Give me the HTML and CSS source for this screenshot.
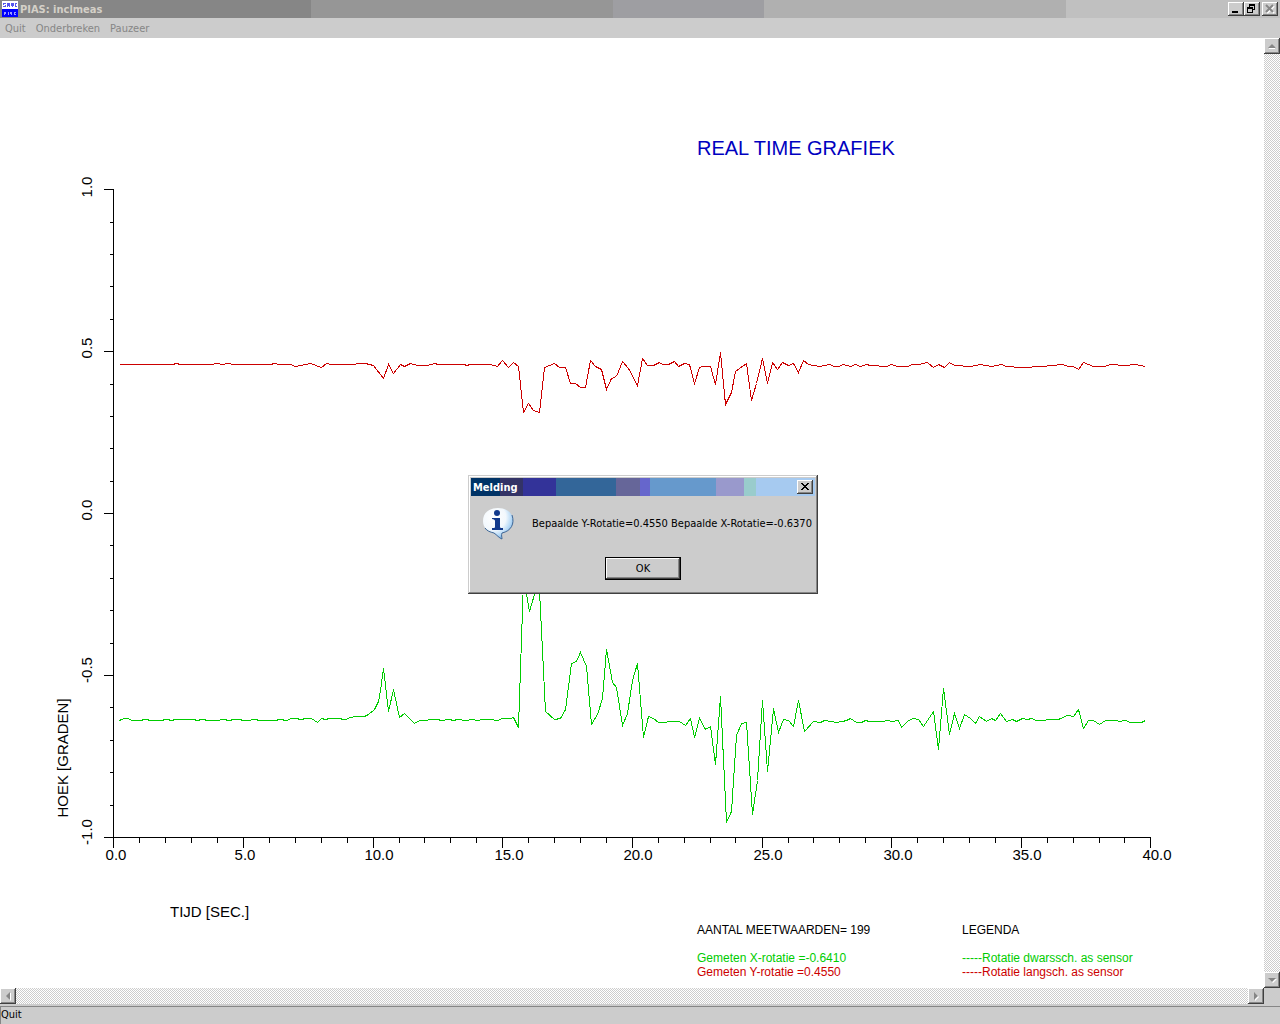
FILE: index.html
```html
<!DOCTYPE html>
<html lang="nl">
<head>
<meta charset="utf-8">
<title>PIAS: inclmeas</title>
<link rel="stylesheet" href="styles.css">
</head>
<body>
<div class="window">
  <header class="titlebar">
    <svg class="app-icon" width="16" height="16" viewBox="0 0 16 16" shape-rendering="crispEdges" aria-hidden="true">
      <rect width="16" height="8" fill="#fff"/>
      <rect y="8" width="16" height="8" fill="#00f"/>
      <path d="M1 2h3v1h-2v1h2v2h-3v-1h2v-1h-2zM5 2h3v4h-1v-1h-1v1h-1zM9 2h3v3h-1v1h-1v-1h-1zM13 2h2v1h-1v2h1v1h-2z" fill="#5555ee"/>
      <path d="M2 11h2v2h-1v1h-1zM6 11h1v3h-1zM8 11h2v3h-1v-1h-1zM12 11h2v1h-1v1h1v1h-2z" fill="#9c9cff"/>
    </svg>
    <h1 class="titlebar-text">PIAS: inclmeas</h1>
    <div class="window-buttons">
      <button class="bevel caption-button" type="button" aria-label="Minimize">
        <svg width="12" height="10" viewBox="0 0 12 10" shape-rendering="crispEdges"><path d="M2 7h6v2h-6z"/></svg>
      </button>
      <button class="bevel caption-button" type="button" aria-label="Restore">
        <svg width="12" height="10" viewBox="0 0 12 10" shape-rendering="crispEdges"><path fill-rule="evenodd" d="M3 0h6v6h-2v3h-6v-6h2zM4 2v1h3v2h1v-3zM2 5v3h4v-3z"/></svg>
      </button>
      <button class="bevel caption-button caption-close" type="button" aria-label="Close" disabled>
        <svg width="12" height="10" viewBox="0 0 12 10"><path d="M3 2l7 7M10 2l-7 7" stroke="#fff" stroke-width="2"/><path d="M2 1l7 7M9 1l-7 7" stroke="#868686" stroke-width="2"/></svg>
      </button>
    </div>
  </header>

  <nav class="menubar">
    <button type="button" disabled>Quit</button>
    <button type="button" disabled>Onderbreken</button>
    <button type="button" disabled>Pauzeer</button>
  </nav>

  <main class="workspace">
    <section class="canvas">
      <div class="columns chart-head">
        <h2 class="chart-title">REAL TIME GRAFIEK</h2>
      </div>
      <svg class="chart" viewBox="0 178 1264 690" role="img" aria-label="Hoek in graden tegen tijd in seconden">
        <g class="lines" transform="translate(.5 .5)">
          <path class="axis" d="M103 189H113V837M103 837H1150
            M109 222h4M109 254h4M109 286h4M109 319h4M103 351h10M109 384h4M109 416h4M109 448h4M109 481h4M103 513h10
            M109 545h4M109 578h4M109 610h4M109 643h4M103 675h10M109 707h4M109 740h4M109 772h4M109 805h4
            M113 837v10M139 837v5M165 837v5M191 837v5M217 837v5M243 837v10M269 837v5M295 837v5M321 837v5M347 837v5
            M373 837v10M399 837v5M424 837v5M450 837v5M476 837v5M502 837v10M528 837v5M554 837v5M580 837v5M606 837v5
            M632 837v10M658 837v5M684 837v5M710 837v5M735 837v5M762 837v10M788 837v5M813 837v5M839 837v5M865 837v5
            M891 837v10M917 837v5M943 837v5M969 837v5M995 837v5M1021 837v10M1047 837v5M1073 837v5M1099 837v5M1124 837v5M1150 837v10"/>
          <polyline class="series-y" points="119,364 172,364 176,363 180,364 211,364 216,363 222,364 228,363 233,364 270,364 274,363 279,364 290,364 295,366 310,363 321,367 326,363 331,364 352,364 360,363 365,363 373,365 383,378 388,364 393,373 400,364 404,366 410,363 417,365 427,365 434,363 438,364 463,364 467,365 469,364 490,364 497,366 502,360 508,367 513,362 518,366 523,412 528,403 533,410 539,412 544,367 554,363 559,367 565,367 570,383 575,383 580,387 585,387 590,360 595,366 601,369 606,389 611,378 616,376 622,361 628,368 637,385 642,358 647,365 653,365 659,362 662,364 668,364 674,361 678,366 684,363 689,364 694,383 699,367 702,366 710,366 715,384 720,352 725,404 731,392 735,371 746,363 751,400 756,383 762,358 767,383 772,362 777,369 782,362 788,365 793,363 798,372 803,360 808,364 819,366 824,365 829,364 834,366 838,366 843,364 850,366 855,364 860,366 866,364 870,365 886,366 891,364 897,366 907,366 912,364 918,364 927,362 933,367 938,364 944,367 949,362 954,365 970,366 980,364 991,366 1001,364 1006,366 1021,367 1042,366 1062,364 1068,366 1073,366 1078,369 1083,362 1093,366 1104,366 1110,364 1124,365 1135,364 1145,366"/>
          <polyline class="series-x" points="119,720 121,719 124,718 127,718 132,720 141,720 143,719 147,719 149,720 162,720 164,719 168,719 170,720 172,720 174,719 194,719 196,720 198,720 200,719 204,719 206,720 218,720 221,719 225,719 227,720 230,720 232,719 240,719 242,720 249,720 252,719 256,719 258,720 276,720 278,719 282,719 284,720 287,720 290,718 297,718 299,719 302,719 304,718 311,718 317,722 321,718 325,719 329,718 340,718 342,719 345,719 350,717 356,716 364,716 368,714 374,709 378,701 380,690 383,668 385,685 388,711 393,689 399,717 404,713 414,723 419,720 427,720 428,719 438,719 440,720 444,720 445,719 449,719 453,720 457,719 466,720 471,719 477,720 482,719 490,719 497,720 502,718 510,718 513,717 518,727 523,580 526,594 529,611 534,594 539,590 545,711 554,719 560,718 565,709 571,663 576,661 580,652 586,666 591,724 597,714 602,698 606,649 612,682 616,687 622,725 627,713 632,680 637,663 643,737 648,716 653,718 658,722 666,722 667,721 679,721 685,725 690,718 694,737 699,718 705,729 710,726 715,764 720,696 726,822 731,811 736,735 741,723 746,722 752,814 757,780 762,700 767,771 773,708 778,732 783,719 788,720 793,726 798,700 804,731 813,721 820,722 824,720 831,721 836,722 842,721 846,720 850,718 856,722 861,722 865,720 869,721 883,721 886,720 892,721 898,720 901,727 908,720 913,718 918,719 923,726 933,711 938,749 943,688 949,734 954,713 959,728 964,714 970,718 975,723 979,716 986,721 991,718 995,720 1000,713 1006,721 1012,719 1016,721 1022,718 1027,719 1031,718 1036,720 1044,720 1047,719 1058,719 1067,715 1073,716 1078,709 1083,728 1088,720 1093,720 1099,724 1105,720 1116,720 1119,721 1125,720 1130,722 1141,722 1145,720"/>
        </g>
        <g class="tick-labels">
          <text x="116" y="860">0.0</text>
          <text x="245" y="860">5.0</text>
          <text x="379" y="860">10.0</text>
          <text x="509" y="860">15.0</text>
          <text x="638" y="860">20.0</text>
          <text x="768" y="860">25.0</text>
          <text x="898" y="860">30.0</text>
          <text x="1027" y="860">35.0</text>
          <text x="1157" y="860">40.0</text>
          <text transform="translate(92 187) rotate(-90)">1.0</text>
          <text transform="translate(92 348) rotate(-90)">0.5</text>
          <text transform="translate(92 510) rotate(-90)">0.0</text>
          <text transform="translate(92 670) rotate(-90)">-0.5</text>
          <text transform="translate(92 832) rotate(-90)">-1.0</text>
          <text transform="translate(68 758) rotate(-90)">HOEK [GRADEN]</text>
        </g>
      </svg>
      <div class="columns chart-foot">
        <p class="time-label">TIJD [SEC.]</p>
        <div class="readout">
          <p class="readout-head">AANTAL MEETWAARDEN= 199</p>
          <p class="green">Gemeten X-rotatie =-0.6410</p>
          <p class="red">Gemeten Y-rotatie =0.4550</p>
        </div>
        <div class="readout">
          <p class="readout-head">LEGENDA</p>
          <p class="green">-----Rotatie dwarssch. as sensor</p>
          <p class="red">-----Rotatie langsch. as sensor</p>
        </div>
      </div>
    </section>
    <div class="scrollbar scrollbar-v">
      <button class="bevel scroll-button" type="button" aria-label="Scroll up" disabled>
        <svg width="12" height="12" viewBox="0 0 12 12"><path d="M10 8l-1-1v2h-6v-1z" fill="#fff"/><path d="M2 8l4-4 4 4z" fill="#868686"/></svg>
      </button>
      <button class="bevel scroll-button" type="button" aria-label="Scroll down" disabled>
        <svg width="12" height="12" viewBox="0 0 12 12"><path d="M3 5h8l-4 4z" fill="#fff"/><path d="M2 4h8l-4 4z" fill="#868686"/></svg>
      </button>
    </div>
    <div class="scrollbar scrollbar-h">
      <button class="bevel scroll-button" type="button" aria-label="Scroll left" disabled>
        <svg width="12" height="12" viewBox="0 0 12 12"><path d="M8 3h1v8l-2-2z" fill="#fff"/><path d="M8 2v8l-4-4z" fill="#868686"/></svg>
      </button>
      <button class="bevel scroll-button" type="button" aria-label="Scroll right" disabled>
        <svg width="12" height="12" viewBox="0 0 12 12"><path d="M5 3v8l4-4z" fill="#fff"/><path d="M4 2v8l4-4z" fill="#868686"/></svg>
      </button>
    </div>
  </main>

  <footer class="statusbar">Quit</footer>
</div>

<section class="dialog" role="alertdialog" aria-labelledby="dialog-title" aria-describedby="dialog-text">
  <header class="dialog-titlebar">
    <h2 id="dialog-title">Melding</h2>
    <button class="bevel caption-button" type="button" aria-label="Close">
      <svg width="12" height="10" viewBox="0 0 12 10" shape-rendering="crispEdges"><path d="M2 1h2v1h1v1h2v-1h1v-1h2v1h-1v1h-1v1h-1v1h1v1h1v1h1v1h-2v-1h-1v-1h-2v1h-1v1h-2v-1h1v-1h1v-1h1v-1h-1v-1h-1v-1h-1z"/></svg>
    </button>
  </header>
  <div class="dialog-message">
    <svg width="32" height="34" viewBox="0 0 32 34" aria-hidden="true">
      <defs>
        <radialGradient id="bubble" cx=".35" cy=".3" r=".75">
          <stop offset="0" stop-color="#fff"/>
          <stop offset=".55" stop-color="#f2f8fd"/>
          <stop offset=".8" stop-color="#b4d8f6"/>
          <stop offset="1" stop-color="#6fa8dc"/>
        </radialGradient>
      </defs>
      <path d="M16 1C7 1 1 6 1 14c0 7 5 11 11 12 3 2 5 5 8 6 0-2-1-4 0-6 7-2 11-6 11-12C31 6 25 1 16 1z" fill="url(#bubble)"/>
      <path d="M30 8c3 9-1 16-10 18-1 2 0 4 0 6-3-1-5-4-8-6-4-1-7-2-9-5" fill="none" stroke="#3f6796" stroke-width="1"/>
      <ellipse cx="15" cy="6" rx="3" ry="3" fill="#123a8c"/>
      <path d="M10 11h8v9c0 1 1 1 3 1v2H10v-2c2 0 3 0 3-1v-6c0-1-1-2-3-2z" fill="#123a8c"/>
    </svg>
    <p id="dialog-text">Bepaalde Y-Rotatie=0.4550 Bepaalde X-Rotatie=-0.6370</p>
  </div>
  <button class="bevel ok-button" type="button">OK</button>
</section>
</body>
</html>
```
FILE: styles.css
```css
* {
  box-sizing: border-box;
}

body,
h1,
h2,
p {
  margin: 0;
}

body {
  background: #fff;
  color: #000;
  font: 11px/14px "DejaVu Sans Condensed", "DejaVu Sans", sans-serif;
}

button {
  margin: 0;
  padding: 0;
  border: 0;
  background: #ccc;
  color: #000;
  font: inherit;
}

.window {
  display: flex;
  flex-direction: column;
  min-height: 100vh;
}

/* Raised edge shared by every push button */
.bevel {
  display: flex;
  align-items: center;
  justify-content: center;
  box-shadow: inset -1px -1px #404040, inset 1px 1px #fff, inset -2px -2px #868686;
}

.titlebar {
  display: flex;
  align-items: center;
  gap: 2px;
  height: 18px;
  padding: 0 2px;
  background: linear-gradient(90deg, #868686 311px, #969696 311px 613px, #9e9ea2 613px 764px, #b0b0b0 764px 1066px, #c0c0c0 1066px);
}

.app-icon {
  flex: none;
}

.titlebar-text {
  flex: 1;
  padding-top: 2px;
  color: #d4d0c8;
  font-size: 11px;
  font-weight: bold;
}

.window-buttons {
  display: flex;
}

.caption-button {
  width: 16px;
  height: 14px;
}

.caption-close {
  margin-left: 2px;
}

.menubar {
  display: flex;
  gap: 10px;
  height: 20px;
  padding: 2px 5px 0;
  background: #ccc;
}

.menubar button {
  color: #868686;
}

.workspace {
  display: grid;
  flex: 1;
  grid-template-columns: 1fr 16px;
  grid-template-rows: 1fr 16px;
  background: #ccc;
}

.canvas {
  background: #fff;
  font-family: "Liberation Sans", Arial, sans-serif;
}

.columns {
  display: grid;
  grid-template-columns: 697fr 265fr 302fr;
}

.chart-head {
  padding-top: 98px;
  padding-bottom: 18px;
}

.chart-title {
  grid-column: 2 / 4;
  color: #0000c0;
  font-size: 20px;
  font-weight: normal;
  line-height: 24px;
}

.chart {
  display: block;
  width: 100%;
  overflow: visible;
}

.lines {
  fill: none;
  shape-rendering: crispEdges;
}

.axis {
  stroke: #000;
}

.series-x {
  stroke: #0c0;
}

.series-y {
  stroke: #c00;
}

.tick-labels {
  font-size: 15px;
  text-anchor: middle;
}

.chart-foot {
  padding-top: 35px;
}

.time-label {
  padding-left: 170px;
  font-size: 15px;
  line-height: 18px;
}

.readout {
  padding-top: 20px;
  font-size: 12px;
  line-height: 14px;
}

.readout-head {
  margin-bottom: 14px;
}

.green {
  color: #0c0;
}

.red {
  color: #c00;
}

.scrollbar {
  display: flex;
  justify-content: space-between;
  background: conic-gradient(#fff 25%, #ccc 0 50%, #fff 0 75%, #ccc 0) 0 0 / 2px 2px;
}

.scrollbar-v {
  flex-direction: column;
}

.scroll-button {
  width: 16px;
  height: 16px;
}

.statusbar {
  height: 20px;
  padding: 2px 1px;
  border-top: 2px solid #ccc;
  background: #ccc;
  box-shadow: inset 1px 1px #868686;
}

.dialog {
  position: absolute;
  top: 475px;
  left: 468px;
  width: 350px;
  padding: 3px 3px 14px;
  background: #ccc;
  box-shadow: inset -1px -1px #404040, inset 1px 1px #ccc, inset -2px -2px #868686, inset 2px 2px #fff;
}

.dialog-titlebar {
  display: flex;
  align-items: center;
  justify-content: space-between;
  height: 18px;
  padding: 0 2px;
  background: linear-gradient(90deg, #036 29px, #336 29px 52px, #339 52px 85px, #369 85px 145px, #669 145px 169px, #66c 169px 179px, #69c 179px 245px, #99c 245px 273px, #9cc 273px 285px, #a6caf0 285px);
}

.dialog-titlebar h2 {
  padding-top: 2px;
  color: #fff;
  font-size: 11px;
}

.dialog-message {
  display: flex;
  align-items: center;
  gap: 18px;
  padding: 11px 0 16px 11px;
  white-space: nowrap;
}

.ok-button {
  width: 76px;
  height: 23px;
  margin: 0 auto;
  border: 1px solid #000;
}
```
